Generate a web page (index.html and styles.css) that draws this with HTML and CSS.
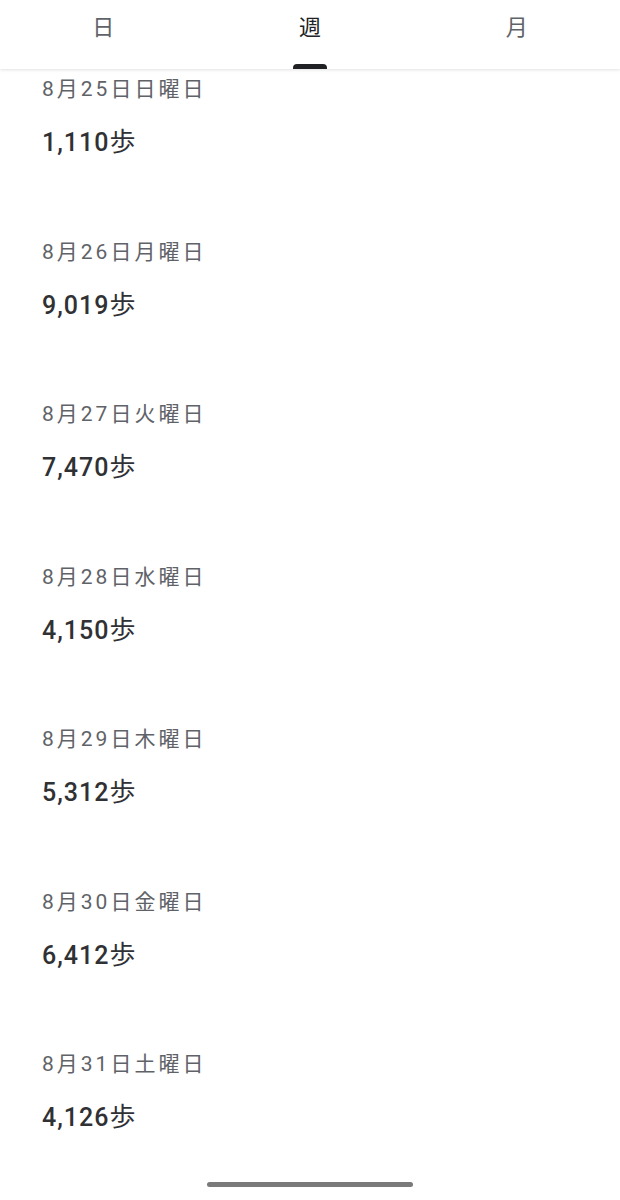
FILE: index.html
```html
<!DOCTYPE html>
<html>
  <head lang="ja">
    <meta charset="UTF-8" />
    <title>歩数</title>
    <link rel="stylesheet" href="styles.css">
  </head>

  <body>
    <div class="tabs">
      <div class="tab">日</div>
      <div class="tab active">週</div>
      <div class="tab">月</div>
    </div>

    <ul class="list">
      <li class="item">
        <p class="date">8月25日日曜日</p>
        <p class="steps">1,110<span class="unit">歩</span></p>
      </li>
      <li class="item">
        <p class="date">8月26日月曜日</p>
        <p class="steps">9,019<span class="unit">歩</span></p>
      </li>
      <li class="item">
        <p class="date">8月27日火曜日</p>
        <p class="steps">7,470<span class="unit">歩</span></p>
      </li>
      <li class="item">
        <p class="date">8月28日水曜日</p>
        <p class="steps">4,150<span class="unit">歩</span></p>
      </li>
      <li class="item">
        <p class="date">8月29日木曜日</p>
        <p class="steps">5,312<span class="unit">歩</span></p>
      </li>
      <li class="item">
        <p class="date">8月30日金曜日</p>
        <p class="steps">6,412<span class="unit">歩</span></p>
      </li>
      <li class="item">
        <p class="date">8月31日土曜日</p>
        <p class="steps">4,126<span class="unit">歩</span></p>
      </li>
    </ul>

    <div class="home-bar"></div>
  </body>
</html>
```

FILE: styles.css
```css
* {
  padding: 0;
  margin: 0;
}

body {
  position: relative;
  height: 1200px;
  overflow: hidden;
  background-color: #fff;
  font-family: Roboto, "Noto Sans CJK JP", sans-serif;
}

.tabs {
  display: flex;
  height: 69px;
  box-shadow: 0 1px 3px rgba(0, 0, 0, 0.12);
  position: relative;
  z-index: 1;
  background-color: #fff;
}

.tab {
  flex: 1;
  position: relative;
  text-align: center;
  font-size: 22px;
  line-height: 56px;
  color: #5f6368;
}

.tab.active {
  color: #202124;
}

.tab.active::after {
  content: "";
  position: absolute;
  left: 50%;
  bottom: 0;
  width: 34px;
  height: 5px;
  margin-left: -17px;
  border-radius: 4px 4px 0 0;
  background-color: #202124;
}

.list {
  list-style: none;
}

.item {
  height: 162.5px;
  padding: 5px 42px 0;
  box-sizing: border-box;
}

.date {
  font-size: 21px;
  line-height: 30px;
  letter-spacing: 3px;
  color: #5f6368;
}

.steps {
  margin-top: 22px;
  font-size: 25px;
  line-height: 32px;
  font-weight: 500;
  letter-spacing: 1px;
  color: #303134;
}

.unit {
  font-size: 26px;
  font-weight: 400;
}

.home-bar {
  position: absolute;
  left: 207px;
  top: 1182px;
  width: 206px;
  height: 5px;
  border-radius: 3px;
  background-color: #7a7a7a;
}
```
